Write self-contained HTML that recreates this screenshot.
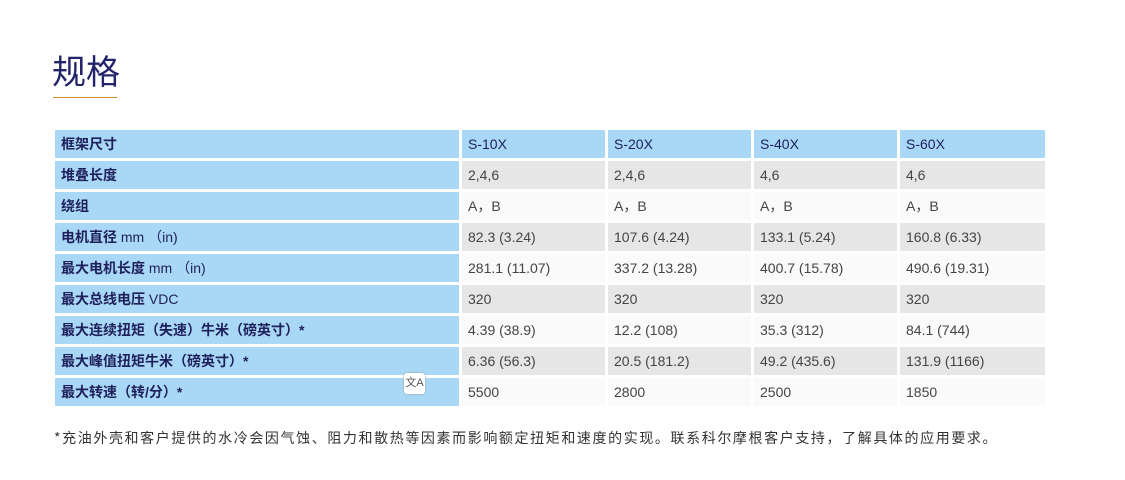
<!DOCTYPE html>
<html><head><meta charset="utf-8"><style>
body{margin:0;background:#fff;width:1125px;height:480px;overflow:hidden;font-family:"Liberation Sans","Noto Sans CJK SC",sans-serif;position:relative}
h1{position:absolute;left:52px;top:48px;margin:0;font-weight:normal;font-size:34px;color:#24246a;line-height:44px;font-family:"Noto Sans CJK SC",sans-serif}
.ul{position:absolute;left:53px;top:97px;width:64px;height:1px;background:#d08a2a}
table{position:absolute;left:52px;top:127px;border-collapse:separate;border-spacing:3px 3px}
td{height:28px;padding:0 0 0 6px;font-size:14px;color:#444;box-sizing:border-box;vertical-align:middle;font-family:"Liberation Sans","Noto Sans CJK SC",sans-serif}
td:first-child{background:#a8d8f5;color:#1f1f5c;font-weight:bold;width:404px}
tr.h td{background:#a8d8f5;color:#1f1f5c}
tr.g td{background:#e6e6e6}
tr.w td{background:#fafafa}
tr td:first-child{background:#a8d8f5}
td.c{width:143px}td.l{width:145px}
td .n{font-weight:normal}
.ft{position:absolute;left:54px;top:428px;font-size:14px;letter-spacing:1.6px;color:#333;font-family:"Noto Sans CJK SC",sans-serif;white-space:nowrap}
.tr{position:absolute;left:404px;top:373px;width:21px;height:21px;background:#fff;border-radius:3px;box-shadow:0 0 2px #999;font-size:11px;color:#555;text-align:center;line-height:21px}
</style></head><body>
<h1>规格</h1><div class="ul"></div>
<table>
<tr class="h"><td>框架尺寸</td><td class="c">S-10X</td><td class="c">S-20X</td><td class="c">S-40X</td><td class="l">S-60X</td></tr>
<tr class="g"><td>堆叠长度</td><td>2,4,6</td><td>2,4,6</td><td>4,6</td><td>4,6</td></tr>
<tr class="w"><td>绕组</td><td>A，B</td><td>A，B</td><td>A，B</td><td>A，B</td></tr>
<tr class="g"><td>电机直径 <span class="n">mm （in)</span></td><td>82.3 (3.24)</td><td>107.6 (4.24)</td><td>133.1 (5.24)</td><td>160.8 (6.33)</td></tr>
<tr class="w"><td>最大电机长度 <span class="n">mm （in)</span></td><td>281.1 (11.07)</td><td>337.2 (13.28)</td><td>400.7 (15.78)</td><td>490.6 (19.31)</td></tr>
<tr class="g"><td>最大总线电压 <span class="n">VDC</span></td><td>320</td><td>320</td><td>320</td><td>320</td></tr>
<tr class="w"><td>最大连续扭矩（失速）牛米（磅英寸）*</td><td>4.39 (38.9)</td><td>12.2 (108)</td><td>35.3 (312)</td><td>84.1 (744)</td></tr>
<tr class="g"><td>最大峰值扭矩牛米（磅英寸）*</td><td>6.36 (56.3)</td><td>20.5 (181.2)</td><td>49.2 (435.6)</td><td>131.9 (1166)</td></tr>
<tr class="w"><td>最大转速（转/分）*</td><td>5500</td><td>2800</td><td>2500</td><td>1850</td></tr>
</table>
<div class="tr">文A</div>
<div class="ft">*充油外壳和客户提供的水冷会因气蚀、阻力和散热等因素而影响额定扭矩和速度的实现。联系科尔摩根客户支持，了解具体的应用要求。</div>
</body></html>
